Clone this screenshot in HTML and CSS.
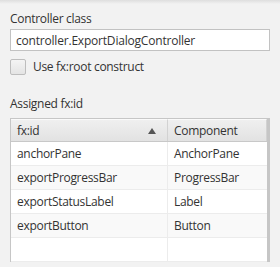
FILE: index.html
```html
<!DOCTYPE html>
<html>
<head>
    <meta charset="UTF-8">
    <title>Controller</title>
    <link rel="stylesheet" href="styles.css">
</head>
<body>
    <div class="panel">
        <div class="label">Controller class</div>
        <div class="text-field">controller.ExportDialogController</div>
        <div class="check-row">
            <span class="check-box"></span>
            <span>Use fx:root construct</span>
        </div>

        <div class="label section">Assigned fx:id</div>
        <div class="table">
            <div class="row header">
                <div class="cell col-id">fx:id<span class="sort-arrow"></span></div>
                <div class="cell col-type">Component</div>
            </div>
            <div class="row">
                <div class="cell col-id">anchorPane</div>
                <div class="cell col-type">AnchorPane</div>
            </div>
            <div class="row odd">
                <div class="cell col-id">exportProgressBar</div>
                <div class="cell col-type">ProgressBar</div>
            </div>
            <div class="row">
                <div class="cell col-id">exportStatusLabel</div>
                <div class="cell col-type">Label</div>
            </div>
            <div class="row odd">
                <div class="cell col-id">exportButton</div>
                <div class="cell col-type">Button</div>
            </div>
            <div class="row">
                <div class="cell col-id"></div>
                <div class="cell col-type"></div>
            </div>
        </div>
    </div>
</body>
</html>
```

FILE: styles.css
```css
body {
    margin: 0;
    background-color: #f2f2f2;
    font-family: "Open Sans", "Noto Sans", sans-serif;
    font-size: 12px;
    color: #333;
    height: 267px;
    overflow: hidden;
}

.panel {
    padding: 10px 10px 0 10px;
    height: 100%;
    box-sizing: border-box;
    background: linear-gradient(#dedede, #f2f2f2 4px);
}

.label {
    height: 18px;
    line-height: 18px;
    letter-spacing: -0.3px;
}

.label.section {
    margin-top: 20px;
    margin-bottom: 5px;
}

.text-field {
    margin-top: 1px;
    height: 22px;
    line-height: 21px;
    padding: 0 5px;
    border: 1px solid #c2c2c2;
    background-color: white;
    box-sizing: border-box;
    letter-spacing: -0.2px;
}

.check-row {
    display: flex;
    align-items: center;
    gap: 7px;
    margin-top: 7px;
    height: 17px;
    letter-spacing: -0.3px;
}

.check-box {
    width: 16px;
    height: 16px;
    border: 1px solid #bdbdbd;
    border-radius: 2px;
    box-sizing: border-box;
    background: linear-gradient(#f4f4f4, #e4e4e4);
}

.table {
    border: 1px solid #c6c6c6;
    border-right-width: 3px;
    border-bottom: none;
    background-color: white;
    letter-spacing: -0.3px;
}

.row {
    display: flex;
    height: 24px;
    border-bottom: 1px solid #ececec;
    box-sizing: border-box;
}

.row.odd {
    background-color: #f9f9f9;
}

.row.header {
    height: 23px;
    background: linear-gradient(#f0f0f0, #e2e2e2);
    border-bottom: 1px solid #c8c8c8;
}

.cell {
    display: flex;
    align-items: center;
    padding: 0 6px;
    box-sizing: border-box;
}

.col-id {
    width: 157px;
    border-right: 1px solid #ececec;
}

.col-type {
    flex: 1;
}

.header .cell {
    border-right: 1px solid #d2d2d2;
    border-top: 1px solid #fafafa;
}

.header .col-id {
    justify-content: space-between;
}

.sort-arrow {
    width: 0;
    height: 0;
    border-left: 4px solid transparent;
    border-right: 4px solid transparent;
    border-bottom: 6px solid #555;
    margin-right: 5px;
}
```
